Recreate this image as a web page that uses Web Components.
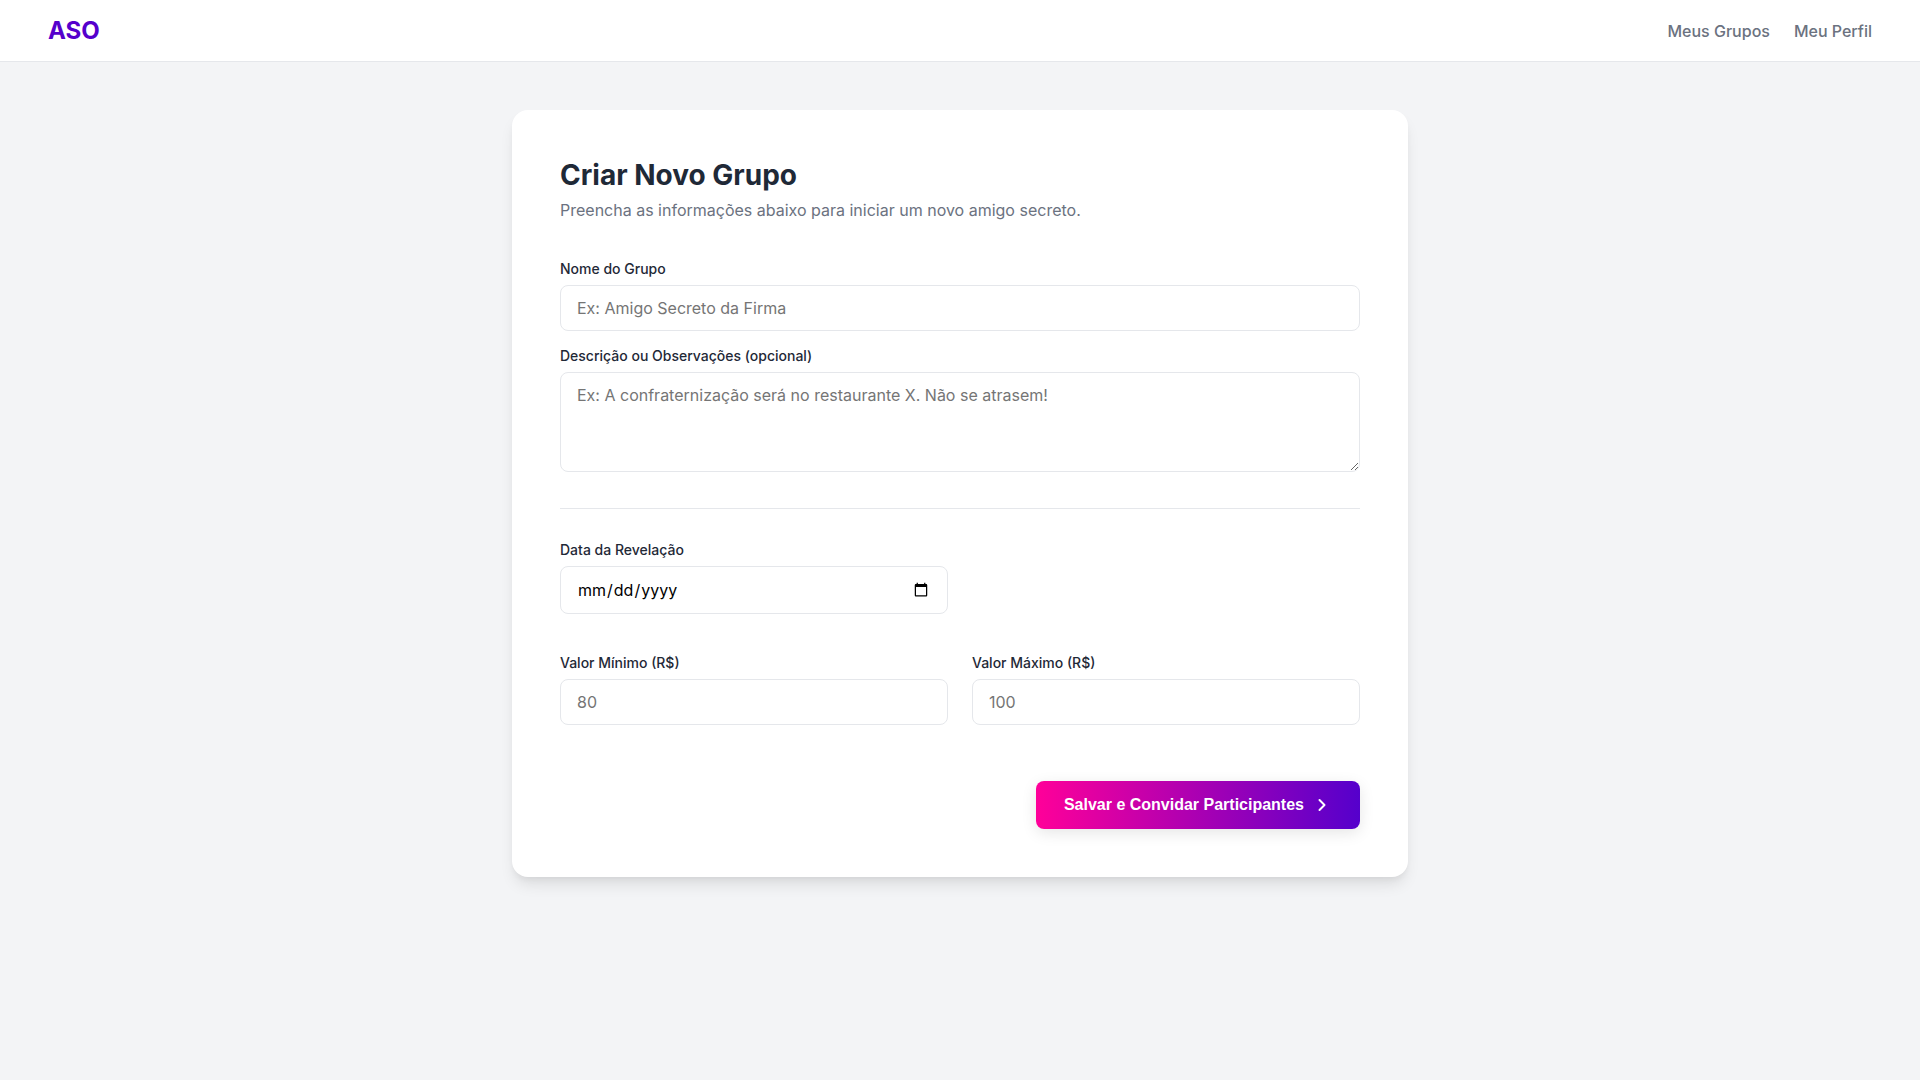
<!DOCTYPE html>
<html lang="pt-BR">
<head>
<meta charset="utf-8">
<title>ASO – Criar Novo Grupo</title>
<style>
  body {
    margin: 0;
    min-height: 100vh;
    background: #f3f4f6;
    color: #1f2937;
    font-family: Inter, "Liberation Sans", sans-serif;
    font-size: 16px;
  }
  .section { display: flex; flex-direction: column; gap: 16px; }
  .columns { display: grid; grid-template-columns: 1fr 1fr; gap: 40px 24px; }
  .actions { display: flex; justify-content: flex-end; margin-top: 56px; }
  .start { grid-column: 1; }
  hr { width: 100%; margin: 36px 0 32px; border: 0; border-top: 1px solid #e5e7eb; }
</style>
</head>
<body>
<aso-header>
  <aso-nav-link to="#grupos">Meus Grupos</aso-nav-link>
  <aso-nav-link to="#perfil">Meu Perfil</aso-nav-link>
</aso-header>
<aso-card>
  <span slot="title">Criar Novo Grupo</span>
  <span slot="subtitle">Preencha as informações abaixo para iniciar um novo amigo secreto.</span>
  <div class="section">
    <aso-field label="Nome do Grupo" type="text" placeholder="Ex: Amigo Secreto da Firma"></aso-field>
    <aso-field label="Descrição ou Observações (opcional)" type="textarea" placeholder="Ex: A confraternização será no restaurante X. Não se atrasem!"></aso-field>
  </div>
  <hr>
  <div class="columns">
    <aso-field class="start" label="Data da Revelação" type="date"></aso-field>
    <aso-field class="start" label="Valor Mínimo (R$)" type="number" placeholder="80"></aso-field>
    <aso-field label="Valor Máximo (R$)" type="number" placeholder="100"></aso-field>
  </div>
  <div class="actions">
    <aso-button>Salvar e Convidar Participantes</aso-button>
  </div>
</aso-card>

<script>
  class AsoHeader extends HTMLElement {
    constructor() {
      super();
      this.attachShadow({ mode: 'open' }).innerHTML = `
        <style>
          :host { display: block; background: #fff; border-bottom: 1px solid #e5e7eb; }
          header { display: flex; justify-content: space-between; align-items: center; padding: 16px 48px; }
          .logo { font-size: 24px; font-weight: 700; color: #5500cc; text-decoration: none; }
          nav { display: flex; gap: 24px; }
        </style>
        <header>
          <a class="logo" href="#">ASO</a>
          <nav><slot></slot></nav>
        </header>`;
    }
  }

  class AsoNavLink extends HTMLElement {
    connectedCallback() {
      if (this.shadowRoot) return;
      this.attachShadow({ mode: 'open' }).innerHTML = `
        <style>
          :host { display: block; }
          a { color: #6b7280; font-weight: 500; text-decoration: none; }
          a:hover { color: #5500cc; }
        </style>
        <a href="${this.getAttribute('to')}"><slot></slot></a>`;
    }
  }

  class AsoCard extends HTMLElement {
    constructor() {
      super();
      this.attachShadow({ mode: 'open' }).innerHTML = `
        <style>
          :host {
            display: block; box-sizing: border-box; max-width: 896px;
            margin: 48px auto; padding: 48px;
            background: #fff; border-radius: 16px;
            box-shadow: 0 10px 15px -3px rgba(0, 0, 0, .1), 0 4px 6px -2px rgba(0, 0, 0, .05);
          }
          h1 { margin: 0 0 8px; font-size: 28px; font-weight: 700; line-height: 34px; }
          p { margin: 0 0 40px; color: #6b7280; line-height: 20px; }
        </style>
        <h1><slot name="title"></slot></h1>
        <p><slot name="subtitle"></slot></p>
        <form><slot></slot></form>`;
    }
  }

  class AsoField extends HTMLElement {
    connectedCallback() {
      if (this.shadowRoot) return;
      const type = this.getAttribute('type');
      const hint = this.getAttribute('placeholder') || '';
      const control = type === 'textarea'
        ? `<textarea id="control" placeholder="${hint}"></textarea>`
        : `<input id="control" type="${type}" placeholder="${hint}">`;
      this.attachShadow({ mode: 'open' }).innerHTML = `
        <style>
          :host { display: flex; flex-direction: column; gap: 8px; }
          label { font-size: 14px; font-weight: 500; line-height: 17px; }
          input, textarea {
            display: block; box-sizing: border-box; width: 100%; margin: 0;
            padding: 12px 16px; border: 1px solid #e5e7eb; border-radius: 8px;
            background: #fff; font-family: inherit; font-size: 16px;
          }
          input { height: 46px; }
          input[type="date"] { height: 48px; }
          textarea { height: 100px; resize: vertical; }
          input:focus, textarea:focus { outline: none; border-color: #5500cc; }
        </style>
        <label for="control">${this.getAttribute('label')}</label>
        ${control}`;
    }
  }

  class AsoButton extends HTMLElement {
    constructor() {
      super();
      this.attachShadow({ mode: 'open' }).innerHTML = `
        <style>
          :host { display: block; }
          button {
            display: flex; align-items: center; gap: 8px;
            padding: 14px 28px; border: 0; border-radius: 8px;
            background: linear-gradient(to right, #ff0099, #5500cc);
            box-shadow: 0 4px 15px rgba(0, 0, 0, .1);
            color: #fff; font: 700 16px "Liberation Sans", Arial, sans-serif; cursor: pointer;
          }
          svg { display: block; width: 20px; height: 20px; }
        </style>
        <button type="button">
          <slot></slot>
          <svg viewBox="0 0 20 20" fill="none" stroke="currentColor" stroke-width="2" stroke-linecap="round" stroke-linejoin="round" aria-hidden="true"><path d="M7.5 15l5-5-5-5"/></svg>
        </button>`;
    }
  }

  customElements.define('aso-header', AsoHeader);
  customElements.define('aso-nav-link', AsoNavLink);
  customElements.define('aso-card', AsoCard);
  customElements.define('aso-field', AsoField);
  customElements.define('aso-button', AsoButton);
</script>
</body>
</html>
